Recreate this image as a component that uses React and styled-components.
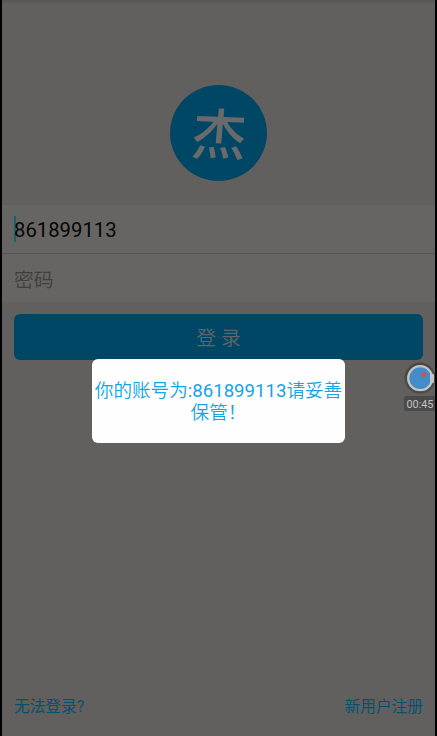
import React from 'react';
import styled, { createGlobalStyle } from 'styled-components';

const GlobalStyle = createGlobalStyle`
  * { box-sizing: border-box; }
  body { margin: 0; background: #000; font-family: Roboto, "Noto Sans CJK SC", sans-serif; }
`;

const Screen = styled.main`
  position: relative;
  display: flex;
  flex-direction: column;
  height: 736px;
  margin: 0 2px;
  overflow: hidden;
  background: linear-gradient(#575654, #61605e 5px);
`;

const Header = styled.header`
  display: flex;
  justify-content: center;
  height: 205px;
  padding-top: 85px;
`;

const Logo = styled.div`
  display: flex;
  align-items: center;
  justify-content: center;
  width: 97px;
  height: 96px;
  border-radius: 50%;
  background: #004765;
  color: #686b6c;
  font: 500 55px/1 "Noto Sans CJK SC", sans-serif;
`;

const LogoMark = styled.span`
  transform: translate(1px, -2px) rotate(2deg) skewX(-3deg);
`;

const Field = styled.div`
  display: flex;
  align-items: center;
  height: ${p => (p.$divided ? 49 : 48)}px;
  padding: 1px 12px 0;
  background: #666563;
  border-bottom: ${p => (p.$divided ? '1px solid #575654' : 'none')};
  color: ${p => (p.$muted ? '#403f3e' : '#050505')};
  font-size: ${p => (p.$muted ? 19.8 : 20.3)}px;
  font-weight: ${p => (p.$muted ? 350 : 400)};
`;

const Caret = styled.span`
  width: 2px;
  height: 26px;
  margin-right: -2px;
  margin-top: -2px;
  background: #17636a;
`;

const LoginButton = styled.button`
  height: 46px;
  margin: 12px 12px 0 12px;
  padding: 0 0 1px;
  border: 0;
  border-radius: 6px;
  background: #004765;
  color: #5f666c;
  font: 350 19.8px Roboto, "Noto Sans CJK SC", sans-serif;
`;

const Footer = styled.footer`
  display: flex;
  justify-content: space-between;
  margin-top: auto;
  padding: 0 12px 18px 12px;
  color: #07506e;
  font-size: 15.7px;
  line-height: 22px;
`;

const Dialog = styled.div`
  position: absolute;
  left: 90px;
  top: 359px;
  width: 253px;
  height: 84px;
  padding-top: 21px;
  border-radius: 6px;
  background: #fefefe;
  color: #12a5e9;
  font-size: 18.6px;
  font-weight: 350;
  line-height: 22px;
  text-align: center;
  white-space: nowrap;
`;

const AccountNumber = styled.span`
  font-weight: 400;
`;

const Recorder = styled.div`
  position: absolute;
  top: 362px;
  right: 0;
  display: flex;
  flex-direction: column;
  align-items: flex-end;
`;

const Time = styled.span`
  width: 31px;
  height: 15px;
  margin-top: 2px;
  padding-left: 1px;
  border-radius: 2px 0 0 2px;
  background: #4b4a49;
  color: #c5c4c3;
  font-size: 10.8px;
  line-height: 17px;
  text-align: center;
`;

function CameraIcon() {
  return (
    <svg width="31" height="32" viewBox="0 0 31 32">
      <circle cx="16" cy="16" r="15.5" fill="#494948" />
      <circle cx="16.2" cy="16.2" r="12" fill="#438bc9" stroke="#c5c5c3" strokeWidth="2.3" />
      <rect x="26" y="12" width="4" height="9" rx="1" fill="#c5c5c3" />
      <circle cx="19.5" cy="12.5" r="2.5" fill="#c95748" />
    </svg>
  );
}

export default function App() {
  return (
    <>
      <GlobalStyle />
      <Screen>
        <Header><Logo><LogoMark>杰</LogoMark></Logo></Header>
        <Field $divided><Caret />861899113</Field>
        <Field $muted>密码</Field>
        <LoginButton>登 录</LoginButton>
        <Footer><span>无法登录?</span><span>新用户注册</span></Footer>
        <Dialog>你的账号为<AccountNumber>:861899113</AccountNumber>请妥善<br />保管！</Dialog>
        <Recorder><CameraIcon /><Time>00:45</Time></Recorder>
      </Screen>
    </>
  );
}
